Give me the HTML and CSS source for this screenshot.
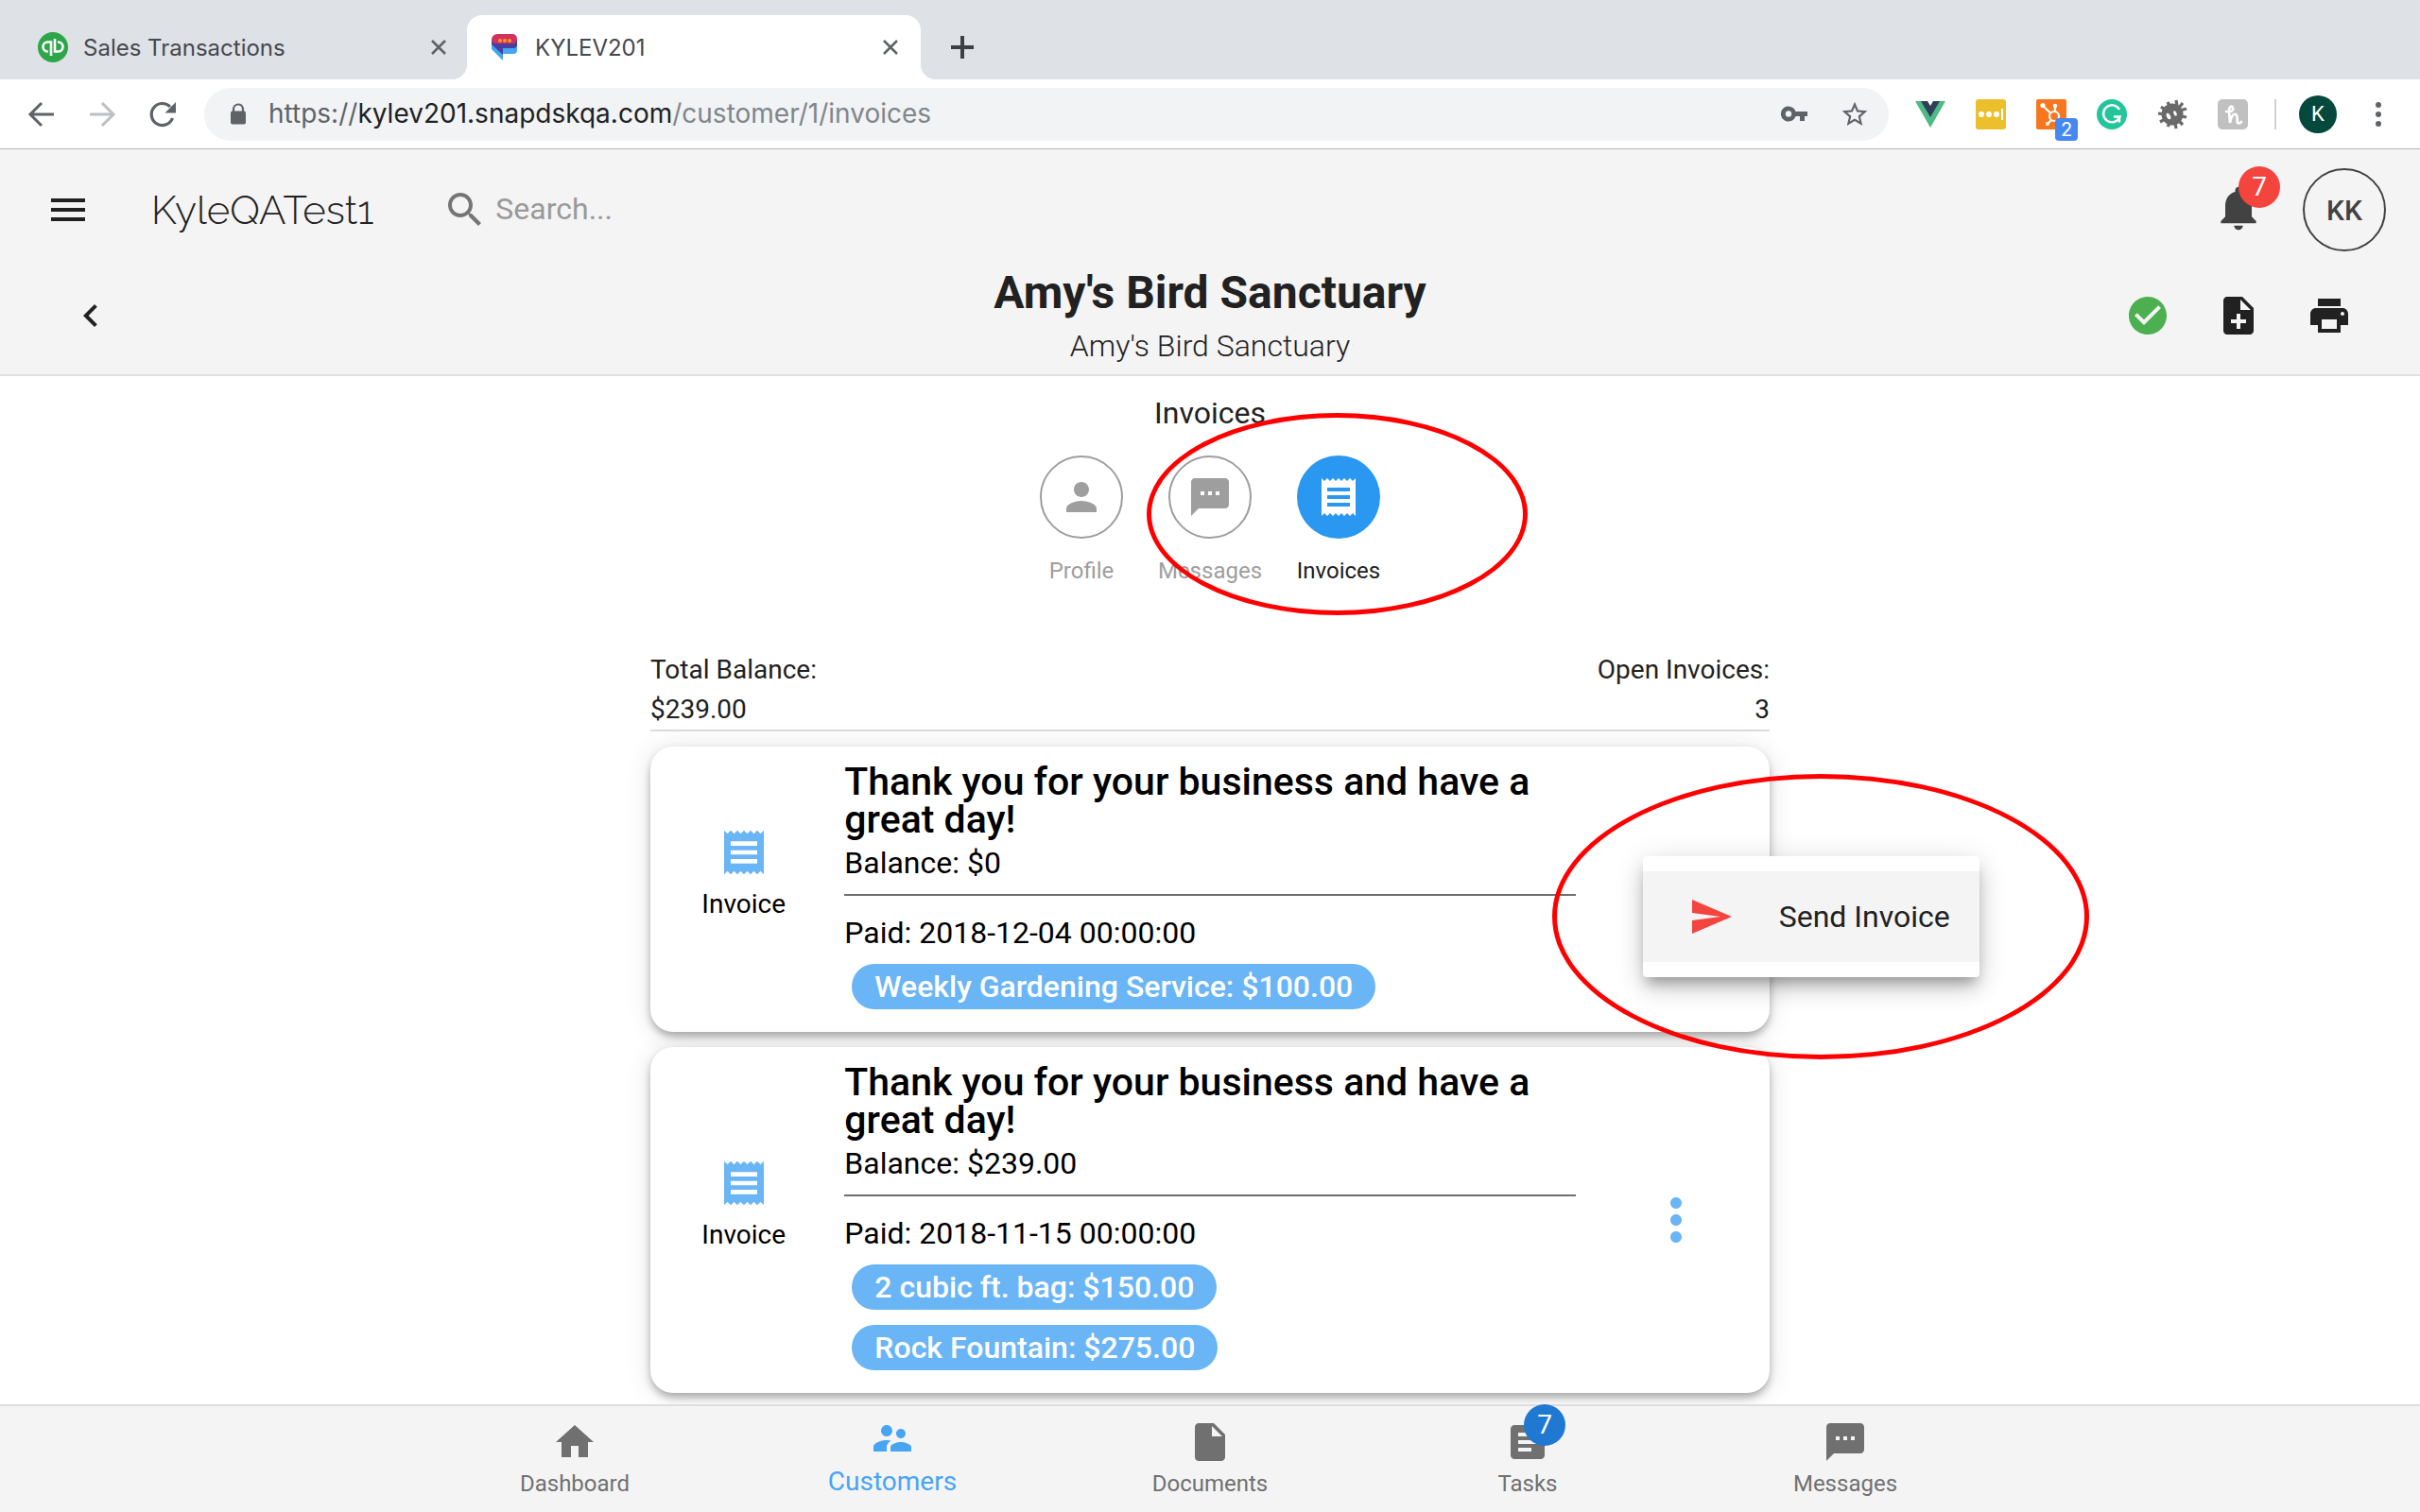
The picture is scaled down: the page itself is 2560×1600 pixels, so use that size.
FILE: index.html
```html
<!DOCTYPE html>
<html lang="en">
<head>
<meta charset="utf-8">
<title>KYLEV201</title>
<link rel="stylesheet" href="styles.css">
</head>
<body>
<svg class="sprite" aria-hidden="true">
  <symbol id="i-receipt" viewBox="0 0 24 24"><path d="M18 17H6v-2h12v2zm0-4H6v-2h12v2zm0-4H6V7h12v2zM3 22l1.500-1.500L6 22l1.500-1.500L9 22l1.500-1.500L12 22l1.500-1.500L15 22l1.500-1.500L18 22l1.500-1.500L21 22V2l-1.500 1.500L18 2l-1.500 1.500L15 2l-1.500 1.500L12 2l-1.500 1.500L9 2 7.500 3.500 6 2 4.500 3.500 3 2v20z"/></symbol>
  <symbol id="i-sms" viewBox="0 0 24 24"><path d="M20 2H4c-1.100 0-1.990.9-1.990 2L2 22l4-4h14c1.100 0 2-.9 2-2V4c0-1.100-.9-2-2-2zM9 11H7V9h2v2zm4 0h-2V9h2v2zm4 0h-2V9h2v2z"/></symbol>
  <symbol id="i-close" viewBox="0 0 20 20"><path d="M3 3l14 14M17 3L3 17" fill="none" stroke="currentColor" stroke-width="2.600"/></symbol>
  <symbol id="i-more" viewBox="0 0 24 24"><path d="M12 8c1.100 0 2-.9 2-2s-.9-2-2-2-2 .9-2 2 .9 2 2 2zm0 2c-1.100 0-2 .9-2 2s.9 2 2 2 2-.9 2-2-.9-2-2-2zm0 6c-1.100 0-2 .9-2 2s.9 2 2 2 2-.9 2-2-.9-2-2-2z"/></symbol>
</svg>

<div class="browser">
  <div class="tabstrip">
    <div class="tab">
      <svg class="favicon" viewBox="0 0 32 32"><circle cx="16" cy="16" r="16" fill="#2ca646"/><g fill="none" stroke="#fff" stroke-width="2.600"><path d="M14 25V10.500h-3.500a5 5 0 0 0 0 10H11"/><path d="M18 7v13.500h3.500a5 5 0 0 0 0-10H21"/></g></svg>
      <span class="tab-title">Sales Transactions</span>
      <button class="tab-close" aria-label="Close tab"><svg><use href="#i-close"/></svg></button>
    </div>
    <div class="tab tab-active">
      <svg class="favicon" viewBox="0 0 32 32"><path d="M2 18l12 12v-7h11a4 4 0 0 0 4-4v-8L2 10z" fill="#42a5f5"/><path d="M2 8h27v6a4 4 0 0 1-4 3H14v7L2 13z" fill="#4a3fa0"/><path d="M8 2h16a5 5 0 0 1 5 5c0 2-1 4-3 5H6C4 12 2 10 2 8a6 6 0 0 1 6-6z" fill="#d0315f"/><g fill="#fb9a1c"><circle cx="11" cy="9" r="2"/><circle cx="16" cy="9" r="2"/><circle cx="21" cy="9" r="2"/></g></svg>
      <span class="tab-title">KYLEV201</span>
      <button class="tab-close" aria-label="Close tab"><svg><use href="#i-close"/></svg></button>
    </div>
    <button class="tab-new" aria-label="New tab"><svg viewBox="0 0 28 28"><path d="M14 2v24M2 14h24" fill="none" stroke="currentColor" stroke-width="4"/></svg></button>
  </div>
  <div class="toolbar">
    <div class="nav-buttons">
      <button aria-label="Back"><svg viewBox="0 0 32 32"><path d="M29 16H5M16 4L4 16l12 12" fill="none" stroke="#5f6368" stroke-width="3"/></svg></button>
      <button aria-label="Forward"><svg viewBox="0 0 32 32"><path d="M3 16h24M16 4l12 12-12 12" fill="none" stroke="#bdbfc1" stroke-width="3"/></svg></button>
      <button aria-label="Reload"><svg viewBox="0 0 32 32"><path d="M26.500 20A11.500 11.500 0 1 1 24 8" fill="none" stroke="#5f6368" stroke-width="3.200"/><path d="M30 3v11.500H18.500z" fill="#5f6368"/></svg></button>
    </div>
    <div class="omnibox">
      <svg class="lock" viewBox="0 0 20 24"><path d="M5 9V6.500a5 5 0 0 1 10 0V9" fill="none" stroke="#5f6368" stroke-width="2.200"/><rect x="2" y="8.500" width="16" height="14" rx="2" fill="#5f6368"/></svg>
      <span class="url"><span class="scheme">https://</span><span class="host">kylev201.snapdskqa.com</span>/customer/1/invoices</span>
      <button aria-label="Saved password"><svg viewBox="0 0 32 32"><path d="M17.500 13a8 8 0 1 0 0 5H22v5h5v-5h3v-5zM10 18.700a3.200 3.200 0 1 1 0-6.400 3.200 3.200 0 0 1 0 6.400z" fill="#5f6368"/></svg></button>
      <button aria-label="Bookmark"><svg viewBox="0 0 24 24"><path d="M22 9.240l-7.190-.62L12 2 9.190 8.630 2 9.240l5.460 4.730L5.820 21 12 17.270 18.180 21l-1.630-7.030L22 9.240zM12 15.400l-3.760 2.270 1-4.280-3.320-2.880 4.380-.38L12 6.100l1.710 4.040 4.380.38-3.320 2.880 1 4.280L12 15.400z" fill="#5f6368"/></svg></button>
    </div>
    <div class="extensions">
      <button aria-label="Vue devtools"><svg viewBox="0 0 32 32"><path d="M0 2h12l4 6 4-6h12L16 30z" fill="#4dba87"/><path d="M6 2h7l3 5 3-5h7L16 19z" fill="#2f3f57"/></svg></button>
      <button aria-label="Password filler"><svg viewBox="0 0 32 32"><rect width="32" height="32" rx="3" fill="#ecc02c"/><g fill="#fff"><circle cx="6" cy="16" r="3"/><circle cx="14" cy="16" r="3"/><circle cx="22" cy="16" r="3"/><path d="M27 10h2v12h-2z"/></g></svg></button>
      <button class="has-count" aria-label="HubSpot"><svg viewBox="0 0 32 32"><rect width="32" height="32" rx="2" fill="#f8761f"/><g fill="none" stroke="#fff" stroke-width="2.200"><circle cx="19" cy="18" r="5"/><path d="M20 13V8M15.500 15L7 7M16 22l-4 4"/></g><g fill="#fff"><circle cx="20" cy="7" r="2.200"/><circle cx="7" cy="6.500" r="2.600"/><circle cx="12" cy="26" r="2"/></g></svg><span class="count">2</span></button>
      <button aria-label="Grammarly"><svg viewBox="0 0 32 32"><circle cx="16" cy="16" r="16" fill="#25c59c"/><path d="M24 11A9 9 0 1 0 24.500 18.500H18M24 18v6.500" fill="none" stroke="#fff" stroke-width="2.400"/></svg></button>
      <button aria-label="Bug tracker"><svg viewBox="0 0 32 32"><circle cx="16" cy="16" r="11.500" fill="#6a6a6a"/><path d="M20 1l1 6M11 3l3 6M4 8l7 5M1 15l7 1M3 24l7-4M11 29l3-5M20 31l-1-6M27 27l-5-5M31 19l-6-1M31 10l-7 2M27 4l-4 5" fill="none" stroke="#6a6a6a" stroke-width="3.200"/><ellipse cx="12" cy="18" rx="2" ry="3.500" fill="#fff" transform="rotate(-25 12 18)"/><ellipse cx="19" cy="15" rx="1.500" ry="3" fill="#fff" transform="rotate(-25 19 15)"/></svg></button>
      <button aria-label="Honey"><svg viewBox="0 0 32 32"><rect width="32" height="32" rx="5" fill="#c0c0c0"/><path d="M9 13c5 1 8-1 7-4s-4-1-4 3l1 13c1-6 3-10 6-9s1 8 2 9 3 0 4-1" fill="none" stroke="#fff" stroke-width="2.600" stroke-linecap="round"/></svg></button>
    </div>
    <span class="divider"></span>
    <button class="user" aria-label="Profile">K</button>
    <button class="kebab" aria-label="Menu"><svg viewBox="0 0 8 28"><g fill="#5f6368"><circle cx="4" cy="4" r="3"/><circle cx="4" cy="14" r="3"/><circle cx="4" cy="24" r="3"/></g></svg></button>
  </div>
</div>

<header class="app-header">
  <div class="top-row">
    <button class="icon-btn" aria-label="Open navigation"><svg viewBox="0 0 24 24"><path d="M3 18h18v-2H3v2zm0-5h18v-2H3v2zm0-7v2h18V6H3z"/></svg></button>
    <a class="brand" href="#">KyleQATest1</a>
    <label class="search">
      <svg viewBox="0 0 24 24"><path d="M15.500 14h-.79l-.28-.27C15.410 12.590 16 11.110 16 9.500 16 5.910 13.090 3 9.500 3S3 5.910 3 9.500 5.910 16 9.500 16c1.610 0 3.090-.59 4.230-1.570l.27.28v.79l5 4.990L20.490 19l-4.990-5zm-6 0C7.010 14 5 11.990 5 9.500S7.010 5 9.500 5 14 7.010 14 9.500 11.990 14 9.500 14z"/></svg>
      <input type="text" placeholder="Search..." aria-label="Search">
    </label>
    <button class="bell" aria-label="Notifications"><svg viewBox="0 0 24 24"><path d="M12 22c1.100 0 2-.9 2-2h-4c0 1.100.89 2 2 2zm6-6v-5c0-3.070-1.640-5.640-4.500-6.320V4c0-.83-.67-1.500-1.500-1.500s-1.500.67-1.500 1.500v.68C7.630 5.360 6 7.920 6 11v5l-2 2v1h16v-1l-2-2z"/></svg><span class="badge badge-red">7</span></button>
    <button class="avatar">KK</button>
  </div>
  <div class="title-row">
    <div class="left"><button class="icon-btn" aria-label="Back to customers"><svg viewBox="0 0 24 24"><path d="M15.410 7.410L14 6l-6 6 6 6 1.410-1.410L10.830 12z"/></svg></button></div>
    <div class="titles">
      <h1>Amy's Bird Sanctuary</h1>
      <p>Amy's Bird Sanctuary</p>
    </div>
    <div class="right">
      <button class="icon-btn synced" aria-label="Synced"><svg viewBox="0 0 24 24"><path d="M12 2C6.480 2 2 6.480 2 12s4.480 10 10 10 10-4.480 10-10S17.520 2 12 2zm-2 15l-5-5 1.410-1.410L10 14.170l7.590-7.590L19 8l-9 9z"/></svg></button>
      <button class="icon-btn" aria-label="New document"><svg viewBox="0 0 24 24"><path d="M14 2H6c-1.100 0-1.990.9-1.990 2L4 20c0 1.100.89 2 1.990 2H18c1.100 0 2-.9 2-2V8l-6-6zm2 14h-3v3h-2v-3H8v-2h3v-3h2v3h3v2zm-3-7V3.500L18.500 9H13z"/></svg></button>
      <button class="icon-btn" aria-label="Print"><svg viewBox="0 0 24 24"><path d="M19 8H5c-1.660 0-3 1.340-3 3v6h4v4h12v-4h4v-6c0-1.660-1.340-3-3-3zm-3 11H8v-5h8v5zm3-7c-.55 0-1-.45-1-1s.45-1 1-1 1 .45 1 1-.45 1-1 1zm-1-9H6v4h12V3z"/></svg></button>
    </div>
  </div>
</header>

<main>
  <h2>Invoices</h2>
  <nav class="sections" aria-label="Customer sections">
    <a href="#"><span class="disc"><svg viewBox="0 0 24 24"><path d="M12 12c2.210 0 4-1.790 4-4s-1.790-4-4-4-4 1.790-4 4 1.790 4 4 4zm0 2c-2.670 0-8 1.340-8 4v2h16v-2c0-2.660-5.330-4-8-4z"/></svg></span>Profile</a>
    <a href="#"><span class="disc"><svg><use href="#i-sms"/></svg></span>Messages</a>
    <a href="#" class="current"><span class="disc"><svg><use href="#i-receipt"/></svg></span>Invoices</a>
    <span class="ring ring-section"></span>
  </nav>

  <div class="column">
    <div class="summary">
      <div>Total Balance:<br>$239.00</div>
      <div class="end">Open Invoices:<br>3</div>
    </div>

    <article class="card">
      <div class="kind"><svg><use href="#i-receipt"/></svg>Invoice</div>
      <div class="details">
        <h3>Thank you for your business and have a great day!</h3>
        <p class="balance">Balance: $0</p>
        <p class="paid">Paid: 2018-12-04 00:00:00</p>
        <ul class="chips"><li>Weekly Gardening Service: $100.00</li></ul>
      </div>
      <div class="actions">
        <div class="menu">
          <button><svg viewBox="0 0 24 24"><path d="M2.010 21L23 12 2.010 3 2 10l15 2-15 2z"/></svg>Send Invoice</button>
          <span class="ring ring-menu"></span>
        </div>
      </div>
    </article>

    <article class="card">
      <div class="kind"><svg><use href="#i-receipt"/></svg>Invoice</div>
      <div class="details">
        <h3>Thank you for your business and have a great day!</h3>
        <p class="balance">Balance: $239.00</p>
        <p class="paid">Paid: 2018-11-15 00:00:00</p>
        <ul class="chips"><li>2 cubic ft. bag: $150.00</li><li>Rock Fountain: $275.00</li></ul>
      </div>
      <div class="actions"><button class="more" aria-label="Invoice actions"><svg><use href="#i-more"/></svg></button></div>
    </article>
  </div>
</main>

<nav class="bottom-nav" aria-label="Main">
  <a href="#"><span class="nav-icon"><svg viewBox="0 0 24 24"><path d="M10 20v-6h4v6h5v-8h3L12 3 2 12h3v8z"/></svg></span>Dashboard</a>
  <a href="#" class="current"><span class="nav-icon"><svg viewBox="0 0 24 24"><path d="M16.500 12c1.380 0 2.490-1.120 2.490-2.500S17.880 7 16.500 7C15.120 7 14 8.120 14 9.500s1.120 2.500 2.500 2.500zM9 11c1.660 0 2.990-1.340 2.990-3S10.660 5 9 5C7.340 5 6 6.340 6 8s1.340 3 3 3zm7.500 3c-1.830 0-5.500.92-5.500 2.750V19h11v-2.250c0-1.830-3.670-2.750-5.500-2.750zM9 13c-2.330 0-7 1.170-7 3.500V19h7v-2.250c0-.85.33-2.340 2.370-3.470C10.500 13.100 9.660 13 9 13z"/></svg></span>Customers</a>
  <a href="#"><span class="nav-icon"><svg viewBox="0 0 24 24"><path d="M6 2c-1.100 0-1.990.9-1.990 2L4 20c0 1.100.89 2 1.990 2H18c1.100 0 2-.9 2-2V8l-6-6H6zm7 7V3.500L18.500 9H13z"/></svg></span>Documents</a>
  <a href="#"><span class="nav-icon"><svg viewBox="0 0 24 24"><path d="M19 3H5c-1.100 0-2 .9-2 2v14c0 1.100.9 2 2 2h14c1.100 0 2-.9 2-2V5c0-1.100-.9-2-2-2zm-5 14H7v-2h7v2zm3-4H7v-2h10v2zm0-4H7V7h10v2z"/></svg><span class="badge badge-blue">7</span></span>Tasks</a>
  <a href="#"><span class="nav-icon"><svg><use href="#i-sms"/></svg></span>Messages</a>
</nav>
</body>
</html>
```
FILE: styles.css
```css
* { box-sizing: border-box; margin: 0; padding: 0; }

html, body { height: 100%; }

body {
  display: flex;
  flex-direction: column;
  font-family: Roboto, "Liberation Sans", sans-serif;
  color: #212121;
  background: #fff;
}

button {
  display: flex;
  align-items: center;
  justify-content: center;
  border: 0;
  background: none;
  font: inherit;
  color: inherit;
}

a { color: inherit; text-decoration: none; }
svg { display: block; fill: currentColor; flex: none; }
.sprite { position: absolute; width: 0; height: 0; }

/* Browser chrome */
.browser {
  flex: none;
  font-family: Inter, "Liberation Sans", sans-serif;
  border-bottom: 1px solid #b3b3b3;
}

.tabstrip {
  display: flex;
  align-items: flex-end;
  height: 84px;
  padding: 16px 0 0 14px;
  background: #dee1e6;
}

.tab {
  display: flex;
  align-items: center;
  gap: 16px;
  width: 480px;
  height: 68px;
  padding: 0 20px 0 26px;
  font-size: 24px;
  color: #45484d;
  position: relative;
}

.tab-active { background: #fff; border-radius: 16px 16px 0 0; padding: 0 22px 0 24px; }

.tab-active::before,
.tab-active::after {
  content: "";
  position: absolute;
  bottom: 0;
  width: 16px;
  height: 16px;
}

.tab-active::before { right: 100%; background: radial-gradient(circle at 0 0, transparent 16px, #fff 16px); }
.tab-active::after { left: 100%; background: radial-gradient(circle at 100% 0, transparent 16px, #fff 16px); }

.favicon { width: 32px; height: 32px; }
.tab-title { flex: 1; white-space: nowrap; }
.tab-close, .tab-close svg { width: 20px; height: 20px; color: #5f6368; }
.tab-new { width: 88px; height: 68px; color: #3c4043; }
.tab-new svg { width: 28px; height: 28px; }

.toolbar {
  display: flex;
  align-items: center;
  height: 73px;
  padding: 0 24px 0 12px;
}

.nav-buttons { display: flex; margin-right: 12px; }
.nav-buttons button { width: 64px; height: 64px; }
.nav-buttons svg { width: 32px; height: 32px; }

.omnibox {
  flex: 1;
  display: flex;
  align-items: center;
  height: 56px;
  padding: 0 4px 0 26px;
  border-radius: 28px;
  background: #f1f3f4;
}

.lock { width: 20px; height: 24px; }
.url { flex: 1; margin-left: 22px; padding-bottom: 2px; font-size: 28px; color: #80868b; white-space: nowrap; }
.scheme { color: #5f6368; }
.host { color: #202124; }
.omnibox button { width: 64px; height: 56px; }
.omnibox button svg { width: 32px; height: 32px; }

.extensions { display: flex; margin-left: 12px; }
.extensions button { width: 64px; height: 64px; position: relative; }
.extensions svg { width: 32px; height: 32px; }

.count {
  position: absolute;
  right: 4px;
  bottom: 4px;
  width: 24px;
  height: 24px;
  border-radius: 4px;
  background: #4688f1;
  color: #fff;
  font-size: 20px;
  line-height: 24px;
}

.divider { width: 2px; height: 32px; margin: 0 24px 0 12px; background: #ced0d4; }

.user {
  width: 40px;
  height: 40px;
  border-radius: 50%;
  background: #04493c;
  color: #fff;
  font-family: Roboto, sans-serif;
  font-size: 22px;
}

.kebab { width: 40px; height: 40px; margin-left: 24px; }
.kebab svg { width: 8px; height: 28px; }

/* App header */
.app-header {
  flex: none;
  background: #f4f4f4;
  border-bottom: 2px solid #e0e0e0;
}

.top-row {
  display: flex;
  align-items: center;
  height: 128px;
  padding: 0 36px 0 24px;
}

.icon-btn { width: 96px; height: 96px; }
.icon-btn svg { width: 48px; height: 48px; }

.brand {
  margin: 0 73px 0 40px;
  font-family: Raleway, Lato, sans-serif;
  font-weight: 300;
  font-size: 42px;
}

.search { flex: 1; display: flex; align-items: center; gap: 8px; color: #757575; }
.search svg { width: 48px; height: 48px; }
.search input {
  width: 480px;
  padding-bottom: 2px;
  border: 0;
  outline: 0;
  background: none;
  font: inherit;
  font-size: 32px;
  line-height: 40px;
}
.search input::placeholder { color: #999; opacity: 1; }

.bell { position: relative; margin: 0 40px 4px 0; color: #424242; }
.bell svg { width: 56px; height: 56px; }

.badge {
  position: absolute;
  width: 44px;
  height: 44px;
  border-radius: 50%;
  color: #fff;
  font-size: 28px;
  line-height: 44px;
  text-align: center;
}
.badge-red { top: -16px; right: -16px; background: #f4443e; }
.badge-blue { top: -16px; right: -16px; background: #1f78d1; }

.avatar {
  width: 88px;
  height: 88px;
  border: 2px solid #424242;
  border-radius: 50%;
  color: #424242;
  font-size: 30px;
  font-weight: 500;
}

.title-row {
  display: grid;
  grid-template-columns: 1fr auto 1fr;
  padding: 0 48px;
}
.title-row .left, .title-row .right { display: flex; }
.title-row .right { justify-content: flex-end; }
.synced { color: #4caf50; }

.titles { text-align: center; padding-bottom: 6px; }
.titles h1 { font-size: 48px; line-height: 48px; font-weight: 700; }
.titles p { margin-top: 8px; font-size: 32px; line-height: 48px; font-weight: 300; }

/* Content */
main {
  flex: 1;
  min-height: 0;
  overflow: hidden;
  padding: 15px 0 12px;
}

h2 { font-size: 32px; line-height: 48px; font-weight: 400; text-align: center; }

.sections {
  display: flex;
  justify-content: center;
  position: relative;
  width: 408px;
  margin: 21px auto 66px;
}
.sections a {
  flex: 1;
  display: flex;
  flex-direction: column;
  align-items: center;
  gap: 16px;
  font-size: 24px;
  line-height: 36px;
  color: #9e9e9e;
}
.disc {
  display: flex;
  align-items: center;
  justify-content: center;
  width: 88px;
  height: 88px;
  border: 2px solid #9e9e9e;
  border-radius: 50%;
}
.disc svg { width: 48px; height: 48px; }
.sections .current { color: #212121; }
.current .disc { border: 0; background: #2a98f0; color: #fff; }

.ring { position: absolute; border: 5px solid #f00; border-radius: 50%; pointer-events: none; }
.ring-section { width: 403px; height: 214px; left: 137px; top: -45px; }
.ring-menu { width: 568px; height: 302px; left: -96px; top: -87px; }

.column { max-width: 1184px; margin: 0 auto; }

.summary {
  display: flex;
  justify-content: space-between;
  border-bottom: 2px solid #dcdcdc;
  font-size: 28px;
  line-height: 42px;
}
.end { text-align: right; }

.card {
  display: grid;
  grid-template-columns: 1fr 4fr 1fr;
  align-items: center;
  margin-top: 16px;
  border-radius: 24px;
  background: #fff;
  color: #000;
  box-shadow: 0 6px 10px -2px rgba(0, 0, 0, .2), 0 4px 8px rgba(0, 0, 0, .14), 0 2px 28px rgba(0, 0, 0, .12);
}

.kind {
  display: flex;
  flex-direction: column;
  align-items: center;
  gap: 6px;
  padding-bottom: 30px;
  font-size: 28px;
  line-height: 42px;
}
.kind svg { width: 56px; height: 56px; color: #69b5f5; }

.details { padding: 17px 8px 24px; }
.details h3 { font-size: 41px; line-height: 40px; font-weight: 500; }
.balance {
  padding-bottom: 6px;
  border-bottom: 2px solid #6e6e6e;
  font-size: 32px;
  line-height: 53px;
}
.paid { padding-top: 12px; font-size: 32px; line-height: 54px; }

.chips {
  display: flex;
  flex-direction: column;
  align-items: flex-start;
  gap: 16px;
  margin: 6px 8px 0;
  list-style: none;
}
.chips li {
  padding: 0 24px;
  border-radius: 24px;
  background: #69b5f5;
  color: #fff;
  font-size: 32px;
  line-height: 48px;
  font-weight: 500;
}

.actions { align-self: stretch; display: flex; align-items: center; justify-content: center; position: relative; }
.more svg { width: 72px; height: 72px; color: #69b5f5; }

.menu {
  position: absolute;
  z-index: 2;
  left: 63px;
  top: 116px;
  padding: 16px 0;
  border-radius: 4px;
  background: #fff;
  box-shadow: 0 10px 12px -4px rgba(0, 0, 0, .26), 0 14px 24px rgba(0, 0, 0, .12), 0 4px 32px rgba(0, 0, 0, .12);
}
.menu button {
  gap: 48px;
  height: 96px;
  padding: 0 31px 0 48px;
  background: #f4f4f4;
  color: #212121;
  font-size: 32px;
  white-space: nowrap;
}
.menu svg { width: 48px; height: 48px; color: #f4443e; }

/* Bottom navigation */
.bottom-nav {
  flex: none;
  display: flex;
  justify-content: center;
  border-top: 2px solid #dedede;
  background: #f4f4f4;
}
.bottom-nav a {
  flex: 0 1 336px;
  display: flex;
  flex-direction: column;
  align-items: center;
  gap: 4px;
  padding: 14px 0;
  font-size: 24px;
  line-height: 32px;
  color: #707070;
}
.bottom-nav .current { gap: 6px; padding-top: 10px; font-size: 28px; color: #47a5f3; }
.nav-icon { position: relative; }
.nav-icon svg { width: 48px; height: 48px; }
```
